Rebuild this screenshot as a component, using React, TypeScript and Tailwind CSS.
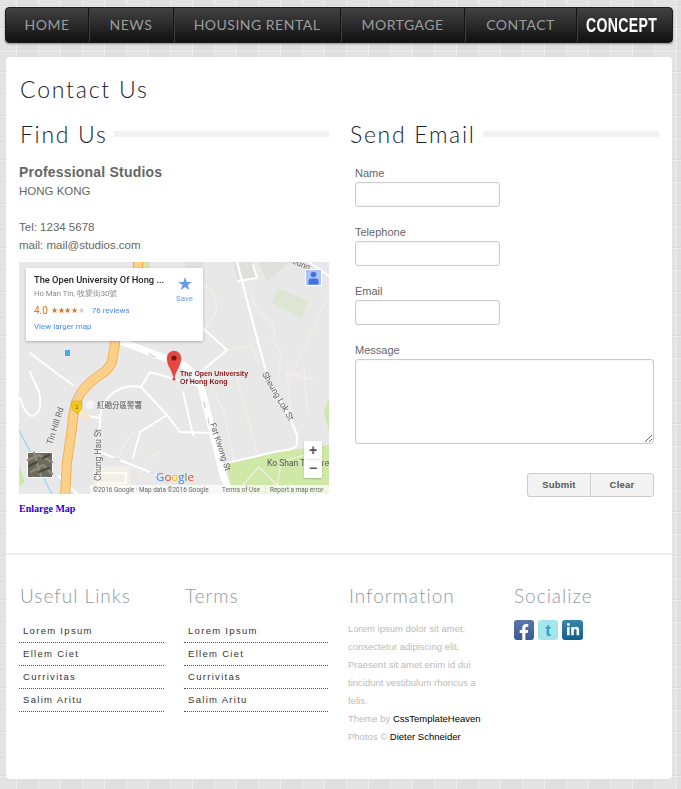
import React from "react";
import { FaFacebookF, FaLinkedinIn } from "react-icons/fa";

const navItems = [
  { label: "HOME", w: "w-[83px]" },
  { label: "NEWS", w: "w-[85px]" },
  { label: "HOUSING RENTAL", w: "w-[167px]" },
  { label: "MORTGAGE", w: "w-[124px]" },
  { label: "CONTACT", w: "w-[112px]" },
];

const links = ["Lorem Ipsum", "Ellem Ciet", "Currivitas", "Salim Aritu"];

function SectionHeading({ title }: { title: string }) {
  return (
    <div className="flex h-[30px] items-center gap-[7px]">
      <h2 className="font-['Lato',sans-serif] text-[23px] font-light leading-[28px] tracking-[1.7px] text-[#18202e]">{title}</h2>
      <div className="h-[6px] flex-1 bg-[#f2f2f2]" />
    </div>
  );
}

function Field({ label }: { label: string }) {
  return (
    <div className="mb-[16px]">
      <label className="block h-[18px] text-[11px] leading-[18px] text-[#666]">{label}</label>
      <input className="block h-[25px] w-[145px] rounded-[3px] border border-[#ccc] bg-white shadow-[inset_0_0_3px_#eee] outline-none" />
    </div>
  );
}

function FooterHeading({ title }: { title: string }) {
  return <h3 className="h-[30px] pl-px font-['Lato',sans-serif] text-[19px] font-light leading-[30px] tracking-[1px] text-[#8f9aa3]">{title}</h3>;
}

function LinkList({ w }: { w: string }) {
  return (
    <ul className={`mt-[9px] ${w}`}>
      {links.map((l) => (
        <li key={l} className="h-[23px] border-b border-dotted border-[#555] pl-[4px] text-[9.5px] leading-[22px] tracking-[1.3px] text-[#333]">
          {l}
        </li>
      ))}
    </ul>
  );
}

function MapView() {
  return (
    <div className="relative h-[232px] w-[310px] overflow-hidden bg-[#e8e8e8]">
      <svg width="310" height="232" viewBox="0 0 310 232" className="block blur-[0.35px]" fill="none" strokeLinecap="round" strokeLinejoin="round">
        <polygon points="214,0 234,0 238,16 219,19" fill="#dfe0dc" />
        <polygon points="239,0 271,0 248,19" fill="#dfe0dc" />
        <polygon points="165,0 184,0 184,60 175,40" fill="#dfe0dc" />
        <polygon points="259,26 289,39 283,56 253,41" fill="#dde6d2" />
        <polygon points="208,201 251,190 274,188 310,183 310,232 212,232" fill="#cfe8a8" />
        <polygon points="0,203 6,220 0,224" fill="#cfe8a8" />
        <polygon points="305,150 310,135 310,170" fill="#cfe8a8" />
        <rect x="75" y="205" width="36" height="22" fill="#f3efe4" />
        <rect x="79" y="211" width="28" height="10" stroke="#fff" strokeWidth="1.6" />
        <path d="M0 168 L33 232" stroke="#a9d9ef" strokeWidth="1.6" />
        <g stroke="#f3efe6" strokeWidth="1.5">
          <path d="M218 116 L238 190" />
          <path d="M184 105 L205 150 L215 200" />
          <path d="M208 88 L232 84 L240 100" />
          <path d="M180 20 Q200 30 197 50 L184 70" />
          <path d="M232 30 Q236 50 250 58 Q260 70 252 76 L262 90 L258 130" />
          <path d="M268 110 L272 150 M285 105 L288 150 M268 110 L295 118" />
          <path d="M115 170 Q105 180 100 195 M140 190 Q125 200 120 215" />
          <path d="M62 150 L70 122 L80 118" />
        </g>
        <g stroke="#f3efe6" strokeWidth="1.2">
          <path d="M222 225 L240 205 L260 225 M258 225 L262 200 L295 190 M295 190 L310 205" />
        </g>
        <g stroke="#fff" strokeWidth="1.9">
          <path d="M218 0 L239 80 L248 113 L271 156 L278 173 L278 183 Q275 188 260 189 L208 201" strokeWidth="2.2" />
          <path d="M219 19 L238 16 L234 3" />
          <path d="M184 66 L208 88 L178 113" />
          <path d="M131 110 L184 125" />
          <path d="M81 156 Q82 140 95 130 Q108 122 122 125 L131 110" />
          <path d="M122 125 L148 153 L161 170 L191 171" />
          <path d="M148 153 L121 170 L114 196" />
          <path d="M164 130 L174 173" />
          <path d="M81 156 L79 223" />
          <path d="M63 153 L81 156" />
          <path d="M81 190 L138 213" />
          <path d="M11 91 L40 113 L54 123" />
          <path d="M1 136 Q8 158 16 153 Q24 148 20 130 L11 110" />
          <path d="M40 214 L58 232" />
          <path d="M270 120 L310 30" stroke="#f3efe6" strokeWidth="1.2" />
          <path d="M290 0 L310 14" />
        </g>
        <path d="M101 79 L164 103 Q178 112 183 128 L191 160 L204 213 L211 232" stroke="#fff" strokeWidth="7" />
        <path d="M119 -2 L119 10" stroke="#f3aa3e" strokeWidth="10" />
        <path d="M119 -2 L119 10" stroke="#fdd08a" strokeWidth="8" />
        <rect x="124" y="0" width="7" height="8" fill="#cfe8a8" />
        <path d="M97 75 L93 100 Q90 108 78 115 Q65 124 59 136 Q54 148 53 166 L48 200 L46 234" stroke="#f3aa3e" strokeWidth="10" strokeLinecap="butt" />
        <path d="M97 75 L93 100 Q90 108 78 115 Q65 124 59 136 Q54 148 53 166 L48 200 L46 234" stroke="#fdd08a" strokeWidth="8.4" strokeLinecap="butt" />
        <path d="M63 148 L72 155 L62 158 Z" fill="#f8e6c8" />
        <g stroke="#c5cde0" strokeWidth="1.2">
          <path d="M130 92 L136 95 M170 113 L172 120 M185 140 L186 146 M189 156 L190 162 M95 196 L101 198 M131 210 L136 212 M60 130 L55 136" />
        </g>
        <path d="M53 139 L63 139 L63 147 L58 152 L53 147 Z" fill="#f2c71e" stroke="#caa010" strokeWidth="0.5" />
        <text x="58" y="147" textAnchor="middle" fontSize="6" fill="#6b5a00" fontFamily="Liberation Sans">1</text>
        <rect x="46" y="88" width="5" height="6" fill="#4aa8e8" />
        <circle cx="71" cy="143" r="4" fill="#f5f5f5" />
        <text x="78" y="146" fontSize="7.5" fill="#555" fontFamily="Noto Sans CJK TC, sans-serif">紅磡分區警署</text>
        <g fontFamily="Roboto, sans-serif" fill="#666" fontSize="8.5">
          <text transform="translate(33 183) rotate(-72)">Tin Hill Rd</text>
          <text transform="translate(82 219) rotate(-90)">Chung Hau St</text>
          <text transform="translate(191 162) rotate(72)">Fat Kwong St</text>
          <text transform="translate(243 112) rotate(60)">Sheung Lok St</text>
          <text transform="translate(264 -3) rotate(24)">Sheung</text>
          <text x="248" y="204" fontSize="8.5" fill="#555">Ko Shan Theatre</text>
        </g>
        <path d="M155 117 C153 107 148 104 148 96 A7 7 0 0 1 162 96 C162 104 157 107 155 117 Z" fill="#e8473f" stroke="#c7362e" strokeWidth="0.4" />
        <circle cx="155" cy="96" r="2.6" fill="#6e1a14" />
        <circle cx="155" cy="117" r="1.6" fill="#d8453b" />
        <g fontFamily="Liberation Sans, sans-serif" fontWeight="700" fontSize="7" fill="#8c1818">
          <text x="161" y="114">The Open University</text>
          <text x="161" y="122">Of Hong Kong</text>
        </g>
        <text x="137" y="219" fontSize="11.5" fontFamily="Open Sans, sans-serif">
          <tspan fill="#4285f4">G</tspan><tspan fill="#ea4335">o</tspan><tspan fill="#fbbc05">o</tspan><tspan fill="#4285f4">g</tspan><tspan fill="#34a853">l</tspan><tspan fill="#ea4335">e</tspan>
        </text>
        <rect x="71" y="223" width="239" height="9" fill="#fff" fillOpacity="0.7" />
        <g fontFamily="Roboto, sans-serif" fontSize="6.4" fill="#666">
          <text x="74" y="230">©2016 Google · Map data ©2016 Google</text>
          <text x="203" y="230">Terms of Use</text>
          <text x="251" y="230">Report a map error</text>
        </g>
        <path d="M246 223 V232" stroke="#e5e5e5" strokeWidth="0.8" />
        <rect x="8" y="190" width="26" height="26" fill="#fff" />
        <rect x="9" y="191" width="24" height="24" fill="#6c6a5e" />
        <path d="M9 198 L20 193 L33 200 M12 210 L24 203 L33 212 M15 191 L22 214" stroke="#8f8a78" strokeWidth="2.5" />
        <path d="M10 204 L18 200 M24 196 L30 193 M20 210 L30 206" stroke="#454a3e" strokeWidth="2" />
        <rect x="286" y="7" width="17" height="17" fill="#fff" />
        <rect x="287" y="8" width="15" height="15" fill="#a9c4f5" />
        <circle cx="294.500" cy="12.500" r="2.800" fill="#3f73dc" />
        <path d="M289.500 22.500 V19 Q289.500 16.500 292 16.500 H297 Q299.500 16.500 299.500 19 V22.500 Z" fill="#3f73dc" />
      </svg>

      <div className="absolute left-[7px] top-[6px] h-[73px] w-[177px] rounded-[1px] bg-white font-['Roboto',sans-serif] shadow-[0_1px_3px_rgba(0,0,0,0.25)] blur-[0.25px]">
        <div className="pl-[8px] pt-[5px] text-[9.3px] font-medium leading-[14px] text-[#222]">The Open University Of Hong ...</div>
        <div className="pl-[8px] text-[7.7px] leading-[13px] text-[#888]">Ho Man Tin, 牧愛街30號</div>
        <div className="flex items-center pl-[8px] pt-[5px] leading-[11px]">
          <span className="text-[10px] text-[#e7711b]">4.0</span>
          <span className="ml-[3px] text-[8px] tracking-[-0.3px] text-[#e7711b]">★★★★</span>
          <span className="text-[8px] text-[#ccc]">★</span>
          <span className="ml-[7px] text-[8px] text-[#4d8be8]">76 reviews</span>
        </div>
        <div className="pl-[8px] pt-[6px] text-[8px] leading-[10px] text-[#4d8be8]">View larger map</div>
        <div className="absolute left-[150px] top-[7px] flex flex-col items-center text-[#6a9be8]">
          <span className="text-[18px] leading-[18px]">★</span>
          <span className="mt-px text-[8px] leading-[10px]">Save</span>
        </div>
      </div>

      <div className="absolute left-[285px] top-[179px] flex h-[37px] w-[18px] flex-col items-center rounded-[1px] bg-white text-[#555] shadow-[0_1px_2px_rgba(0,0,0,0.2)]">
        <span className="h-[18px] text-[14px] font-bold leading-[18px]">+</span>
        <span className="h-px w-[14px] bg-[#e6e6e6]" />
        <span className="h-[18px] text-[14px] font-bold leading-[17px]">−</span>
      </div>
    </div>
  );
}

export default function App() {
  return (
    <div className="min-h-[789px] w-full overflow-hidden bg-[#e3e3e3] bg-[linear-gradient(90deg,#ececec_1px,transparent_1px),linear-gradient(180deg,#dadada_1px,#ececec_1px,#ececec_2px,transparent_2px),linear-gradient(90deg,#dfdfdf_50%,#e3e3e3_50%)] bg-[length:22px_22px,22px_22px,44px_22px] bg-[position:16px_5px,16px_5px,16px_5px] pb-[10px] pt-[7px] font-['Liberation_Sans',Arial,sans-serif]">
      <nav className="ml-[5px] flex h-[36px] w-[668px] overflow-hidden rounded-[4px] border border-[#1c1c1c] bg-[linear-gradient(180deg,#424242,#111111)] shadow-[0_1px_2px_rgba(0,0,0,0.4)]">
        {navItems.map((n) => (
          <a key={n.label} className={`${n.w} shrink-0 border-r border-r-[#151515] text-center font-['Lato',sans-serif] text-[14px] leading-[34px] tracking-[0.5px] text-[#9c9c9c] shadow-[1px_0_0_#3c3c3c]`}>
            {n.label}
          </a>
        ))}
        <div className="min-w-0 flex-1 pl-[9px]">
          <a className="inline-block origin-left scale-x-[0.67] whitespace-nowrap text-[21px] font-bold leading-[34px] tracking-[0.5px] text-white">CONCEPT</a>
        </div>
      </nav>

      <main className="ml-[6px] mt-[14px] h-[722px] w-[666px] rounded-[4px] bg-white pt-[16px]">
        <h1 className="h-[32px] pl-[14px] font-['Lato',sans-serif] text-[23px] font-light leading-[32px] tracking-[1.8px] text-[#18202e]">Contact Us</h1>

        <div className="mt-[14px] flex h-[411px] gap-[21px] pl-[13px] pr-[13px]">
          <section className="w-[310px]">
            <div className="pl-px">
              <SectionHeading title="Find Us" />
            </div>
            <div className="mt-[14px] text-[11.5px] leading-[18px] text-[#666]">
              <div className="text-[14px] font-bold tracking-[0.2px]">Professional Studios</div>
              <div className="pt-px">HONG KONG</div>
              <div className="h-[18px]" />
              <div>Tel: 1234 5678</div>
              <div>mail: mail@studios.com</div>
            </div>
            <div className="mt-[8px]">
              <MapView />
            </div>
            <a className="mt-[9px] block font-['Liberation_Serif',serif] text-[10px] font-bold leading-[12px] text-[#2a00e0]">Enlarge Map</a>
          </section>

          <section className="w-[309px]">
            <SectionHeading title="Send Email" />
            <form className="pl-[5px] pt-[15px]">
              <Field label="Name" />
              <Field label="Telephone" />
              <Field label="Email" />
              <label className="block h-[18px] text-[11px] leading-[18px] text-[#666]">Message</label>
              <textarea className="block h-[85px] w-[299px] rounded-[3px] border border-[#ccc] bg-white shadow-[inset_0_0_3px_#eee] outline-none" />
              <div className="mt-[29px] flex w-[299px] justify-end">
                <button type="button" className="h-[24px] w-[64px] rounded-l-[3px] border border-[#ccc] bg-[#f3f3f3] text-[9.5px] font-bold tracking-[0.2px] text-[#555]">Submit</button>
                <button type="button" className="-ml-px h-[24px] w-[64px] rounded-r-[3px] border border-[#ccc] bg-[#f3f3f3] text-[9.5px] font-bold tracking-[0.2px] text-[#555]">Clear</button>
              </div>
            </form>
          </section>
        </div>

        <div className="mt-[23px] h-[2px] bg-[#eeeeee]" />

        <footer className="flex pl-[13px] pt-[26px]">
          <div className="w-[165px]">
            <FooterHeading title="Useful Links" />
            <LinkList w="w-[145px]" />
          </div>
          <div className="w-[164px]">
            <FooterHeading title="Terms" />
            <LinkList w="w-[144px]" />
          </div>
          <div className="w-[165px]">
            <FooterHeading title="Information" />
            <div className="mt-[7px] w-[135px] pt-[2px] text-[9.5px] leading-[18px] text-[#bbb]">
              <p>Lorem ipsum dolor sit amet, consectetur adipiscing elit. Praesent sit amet enim id dui tincidunt vestibulum rhoncus a felis.</p>
              <p className="whitespace-nowrap">Theme by <a className="text-black">CssTemplateHeaven</a></p>
              <p className="whitespace-nowrap">Photos © <a className="text-black">Dieter Schneider</a></p>
            </div>
          </div>
          <div>
            <FooterHeading title="Socialize" />
            <div className="mt-[8px] flex gap-[4px] pl-px pt-px">
              <span className="flex h-[20px] w-[20px] items-end justify-end overflow-hidden rounded-[3px] bg-[linear-gradient(180deg,#5a76ad,#3b5998)] pr-[2px] text-[16px] text-white"><FaFacebookF /></span>
              <span className="flex h-[20px] w-[20px] items-center justify-center rounded-[3px] bg-[#a5e6ea] text-[17px] font-bold leading-none text-[#2f9fd8]">t</span>
              <span className="flex h-[20px] w-[21px] items-center justify-center rounded-[3px] bg-[linear-gradient(180deg,#3a86ad,#135f8c)] text-[14px] text-white"><FaLinkedinIn /></span>
            </div>
          </div>
        </footer>
      </main>
    </div>
  );
}
